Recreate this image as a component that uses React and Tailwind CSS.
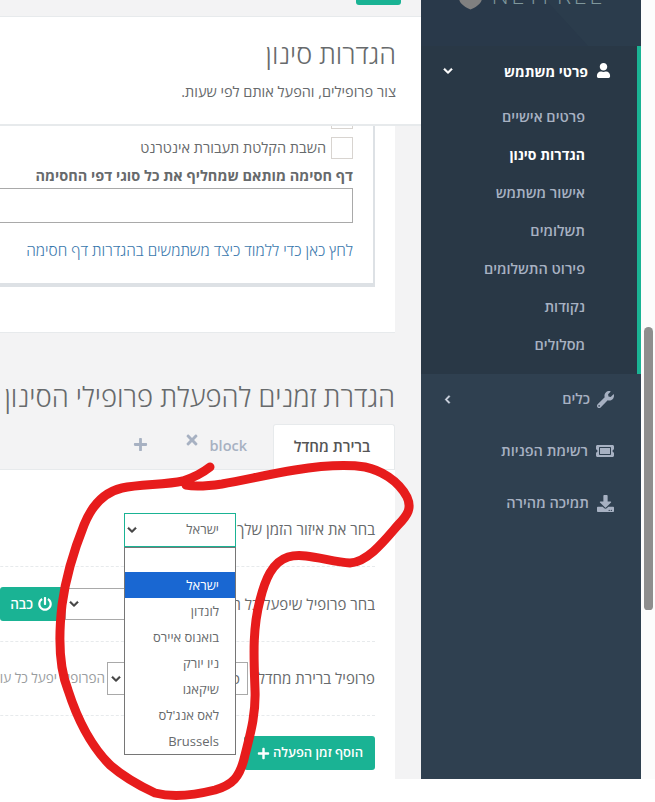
import { FaUser, FaChevronDown, FaChevronLeft, FaWrench, FaTicketAlt, FaDownload, FaPowerOff, FaPlus, FaTimes } from "react-icons/fa";

const subLinks = ["פרטים אישיים", "הגדרות סינון", "אישור משתמש", "תשלומים", "פירוט התשלומים", "נקודות", "מסלולים"];
const zones = ["ישראל", "לונדון", "בואנוס איירס", "ניו יורק", "שיקאגו", "לאס אנג'לס", "Brussels"];

function SelectArrow() {
    return <FaChevronDown className="text-[10px] text-[#444] shrink-0" stroke="currentColor" strokeWidth="30" />;
}

function Sidebar() {
    return (
        <aside className="w-[220px] shrink-0 h-[779px] bg-[#2f4050] text-[14.5px] font-semibold text-[#a7b1c2]">
            <div className="h-[46px] overflow-hidden relative bg-[#2b3c4c]">
                <svg className="absolute left-0 top-0" width="220" height="46" viewBox="0 0 220 46">
                    <path d="M0 0 H125 L167 46 H0 Z" fill="#29394a" />
                </svg>
                <div className="relative flex items-start justify-end gap-[10px] pr-[36px] -mt-[16px] text-[#7f979b] text-[24px] tracking-[2.5px] font-light" dir="ltr">
                    <svg width="23" height="26" viewBox="0 0 24 26">
                        <path d="M0 4 L12 1 L24 4 V14 C24 20 17 24 12 26 C7 24 0 20 0 14 Z" fill="#808080" />
                    </svg>
                    <span className="leading-[26px] -mt-[2px]">NETFREE</span>
                </div>
            </div>
            <div className="h-[328px] bg-[#293846] border-r-4 border-[#1ab394]">
                <div className="flex items-center h-[50px] pr-[26px] pl-[22px] text-white">
                    <FaUser className="text-[15px] ml-[8px] mt-[-2px]" />
                    <span className="font-bold text-[14px]">פרטי משתמש</span>
                    <FaChevronDown className="text-[10px] mr-auto" stroke="currentColor" strokeWidth="30" />
                </div>
                <ul className="pt-[2px] pr-[52px]">
                    {subLinks.map((link) => (
                        <li key={link} className={`h-[38px] leading-[38px] ${link === "הגדרות סינון" ? "text-white font-bold text-[14px]" : ""}`}>
                            {link}
                        </li>
                    ))}
                </ul>
            </div>
            <div className="flex items-center h-[50px] pr-[27px] pl-[22px]">
                <FaWrench className="text-[17px] ml-[7px]" />
                <span>כלים</span>
                <FaChevronLeft className="text-[9px] mr-auto text-[#d5dbe6]" stroke="currentColor" strokeWidth="30" />
            </div>
            <div className="flex items-center h-[54px] pr-[27px]">
                <FaTicketAlt className="text-[18px] ml-[8px]" />
                <span>רשימת הפניות</span>
            </div>
            <div className="flex items-center h-[50px] pr-[27px]">
                <FaDownload className="text-[17px] ml-[8px]" />
                <span>תמיכה מהירה</span>
            </div>
        </aside>
    );
}

function Annotation() {
    return (
        <svg className="absolute left-0 top-0 pointer-events-none" width="655" height="802" viewBox="0 0 655 802">
            <path
                d="M210 467 C200 475 192 478 183 481 C165 485 140 484 122 488 C105 492 92 505 84 525 C74 550 66 575 62 605 C58 640 60 670 68 690 C76 715 90 745 110 765 C125 778 140 786 155 793 C175 798 195 795 215 790 C232 785 240 778 245 755 C250 735 256 715 255 690 C254 660 252 630 260 600 C265 580 272 562 288 557 C305 552 330 562 350 563 C368 562 385 540 398 525 C408 515 412 508 407 497 C398 480 380 470 365 467 C345 464 320 466 295 470 C270 474 245 480 222 484 C208 486 195 487 186 485"
                fill="none"
                stroke="#e71c1c"
                strokeWidth="9"
                strokeLinecap="round"
                strokeLinejoin="round"
            />
        </svg>
    );
}

function Dropdown() {
    return (
        <div className="absolute left-[124px] top-[547px] w-[112px] h-[208px] bg-white border border-[#767676] text-[13px] text-[#676a6c]">
            <div className="h-[24px]"></div>
            {zones.map((zone, i) => (
                <div key={zone} className={`h-[26px] leading-[26px] pr-[16px] ${i === 0 ? "bg-[#1967d2] text-white" : ""}`}>
                    {zone}
                </div>
            ))}
        </div>
    );
}

function Main() {
    return (
        <main className="w-[421px] shrink-0 h-[779px] overflow-hidden bg-[#f3f3f4] text-[14.5px] text-[#676a6c]">
            <div className="h-[16px] pr-[20px] border-b border-[#e7eaec] box-content">
                <div className="w-[45px] h-[5px] bg-[#1ab394] rounded-b-[3px]"></div>
            </div>
            <div className="h-[109px] bg-white border-b-2 border-[#e7eaec] pr-[25px] pt-[20px]">
                <h2 className="text-[27px] font-light leading-[34px] whitespace-nowrap">הגדרות סינון</h2>
                <p className="mt-[11px] leading-[20px] whitespace-nowrap">צור פרופילים, והפעל אותם לפי שעות.</p>
            </div>

            <div className="h-[207px] bg-white border-b border-[#e7eaec] mr-[26px] -ml-[60px]">
                <div className="h-[161px] mr-[20px] bg-white border-r-[2px] border-b-[4px] border-[#dde1e5] pr-[20px]">
                    <div className="w-[22px] h-[3px] border-x border-b border-[#d8d4d0] mb-[8px]"></div>
                    <label className="flex items-center gap-[5px] whitespace-nowrap">
                        <span className="w-[22px] h-[22px] bg-white border border-[#d8d4d0] shrink-0"></span>
                        <span>השבת הקלטת תעבורת אינטרנט</span>
                    </label>
                    <div className="mt-[7px] font-bold leading-[20px] whitespace-nowrap">דף חסימה מותאם שמחליף את כל סוגי דפי החסימה</div>
                    <div className="mt-[2px] h-[35px] border border-[#a9a9a9] bg-white"></div>
                    <a className="block mt-[18px] text-[15.4px] font-light leading-[20px] text-[#3a78ad] whitespace-nowrap">לחץ כאן כדי ללמוד כיצד משתמשים בהגדרות דף חסימה</a>
                </div>
            </div>

            <h2 className="mt-[47px] pr-[26px] text-[27.4px] font-light leading-[34px] whitespace-nowrap">הגדרת זמנים להפעלת פרופילי הסינון</h2>

            <div className="flex items-end mt-[10px] mr-[26px] h-[45px] font-semibold whitespace-nowrap">
                <div className="w-[122px] h-[45px] bg-white rounded-t-[3px] border-x border-t border-[#e7eaec] text-center pr-[4px] leading-[43px] text-[15px] text-[#555]">ברירת מחדל</div>
                <div className="flex items-start h-[45px] pr-[26px] pt-[10px] text-[#a7b1c2] gap-[10px]">
                    <span className="pt-[1px]" dir="ltr">block</span>
                    <FaTimes className="text-[16px] mt-[-2px]" />
                </div>
                <div className="h-[45px] pr-[36px] pt-[13px] text-[#a7b1c2]">
                    <FaPlus className="text-[15px]" />
                </div>
            </div>

            <div className="h-[310px] bg-white border-t border-[#e7eaec] mr-[26px] -ml-[60px] pr-[20px] pt-[20px] whitespace-nowrap">
                <div className="flex items-center h-[77px] border-b border-dashed border-[#e7eaec] pt-[3px]">
                    <span className="w-[139px] shrink-0 text-[15px]">בחר את איזור הזמן שלך</span>
                    <div className="flex items-center justify-between w-[112px] h-[34px] bg-white border border-[#1ab394] pr-[16px] pl-[2px] text-[13px] relative">
                        <span>ישראל</span>
                        <SelectArrow />
                    </div>
                </div>
                <div className="flex items-center h-[75px] border-b border-dashed border-[#e7eaec]">
                    <span className="w-[139px] shrink-0 overflow-hidden text-[15px]">בחר פרופיל שיפעל כל הזמן</span>
                    <div className="flex items-center justify-end w-[171px] h-[32px] bg-white border border-[#a9a9a9] pl-[3px] shrink-0">
                        <SelectArrow />
                    </div>
                    <div className="flex items-center gap-[5px] h-[34px] w-[65px] bg-[#1ab394] text-white font-semibold rounded-l-[3px] pr-[13px] shrink-0">
                        <FaPowerOff className="text-[14px]" />
                        <span className="text-[13.5px]">כבה</span>
                    </div>
                </div>
                <div className="flex items-center h-[74px] border-b border-dashed border-[#e7eaec]">
                    <span className="w-[127px] shrink-0 text-[15px]">פרופיל ברירת מחדל</span>
                    <div className="flex items-center justify-between w-[141px] h-[33px] bg-white border border-[#a9a9a9] pr-[7px] pl-[3px] shrink-0">
                        <span>סינון</span>
                        <SelectArrow />
                    </div>
                    <span className="pr-[2px] text-[#999c9e] text-[13.5px]">הפרופיל יפעל כל עוד</span>
                </div>
                <div className="flex items-center gap-[3px] w-[131px] h-[34px] mt-[20px] bg-[#1ab394] text-white text-[13px] font-semibold rounded-[3px] pr-[12px]">
                    <span>הוסף זמן הפעלה</span>
                    <FaPlus className="text-[13px]" />
                </div>
            </div>
        </main>
    );
}

export default function App() {
    return (
        <div className="relative w-[655px] h-[802px] overflow-hidden bg-white font-['Open_Sans','Liberation_Sans',sans-serif]">
            <div className="flex" dir="rtl">
                <div className="w-[14px] h-[779px] shrink-0 bg-[#fcfcfc] pt-[327px] pr-[2px]">
                    <div className="w-[9px] h-[283px] bg-[#8e8e8e] rounded-t-[5px] rounded-b-[4px]"></div>
                </div>
                <Sidebar />
                <Main />
            </div>
            <div dir="rtl"><Dropdown /></div>
            <Annotation />
        </div>
    );
}
